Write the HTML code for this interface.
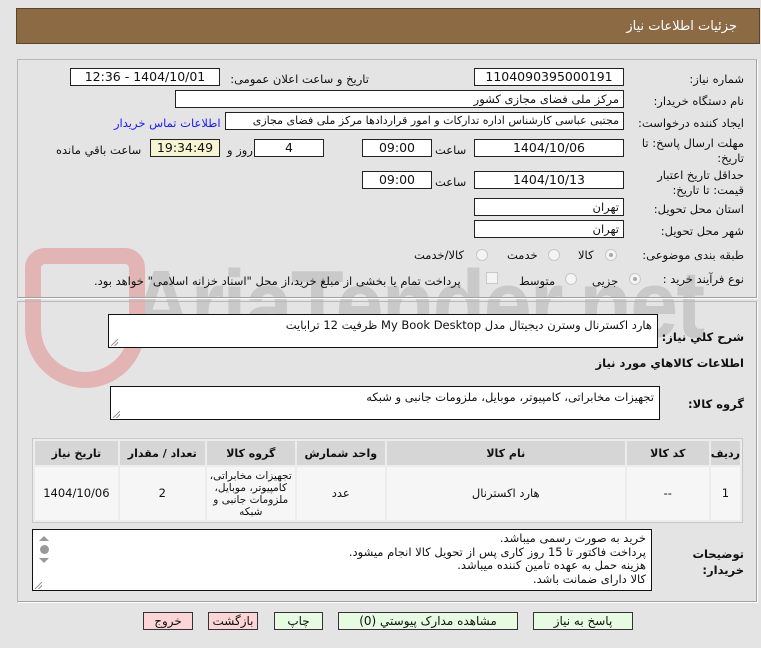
<!DOCTYPE html>
<html><head><meta charset="utf-8"><style>
*{box-sizing:border-box;margin:0;padding:0}
body{width:761px;height:648px;background:#e4e4e4;position:relative;overflow:hidden;font-family:"DejaVu Sans","Liberation Sans",sans-serif;font-size:11.5px;color:#111}
.a{position:absolute;white-space:nowrap}
.hdr{left:16px;top:8px;width:744px;height:36px;background:#8c6b44;border:1px solid #5a4428}
.hdr span{position:absolute;right:22px;top:10px;color:#fff;font-size:13px}
.pnl{position:absolute;border:1px solid #b8b8b8;border-right-color:#fff;border-bottom-color:#fff;box-shadow:inset -1px -1px 0 #a0a0a0}
.in{position:absolute;background:#fff;border:1px solid #222;height:18px;line-height:16px;padding:0 4px;direction:rtl;font-size:11.5px;white-space:nowrap;overflow:hidden}
.c{text-align:center;font-size:12.5px}
.lbl{position:absolute;direction:rtl;text-align:right;white-space:nowrap}
.rd{position:absolute;width:12px;height:12px;border-radius:50%;border:1px solid #c8c8c8;background:#f4f4f4}
.rd.on::after{content:"";position:absolute;left:3px;top:3px;width:4px;height:4px;border-radius:50%;background:#aaa}
.ta{position:absolute;background:#fff;border:1px solid #111;direction:rtl;padding:3px 5px;line-height:14px}
.ta .g{position:absolute;left:2px;bottom:1px;width:7px;height:7px;background:linear-gradient(135deg,transparent 45%,#999 45%,#999 55%,transparent 55%,transparent 70%,#999 70%,#999 80%,transparent 80%)}
table{position:absolute;left:32px;top:438px;width:711px;height:85px;border-collapse:separate;border-spacing:2px;border:1px solid #c8c8c8;background:#ececec;direction:rtl}
th{background:#d6d6d6;font-weight:bold;height:24px;font-size:11px}
td{background:#f6f6f6;text-align:center;font-size:11.5px;line-height:12.5px}
.btn{position:absolute;top:612px;height:18px;border:1px solid #333;text-align:center;line-height:16px;font-size:12px}
.p{background:#fcd6d6}.gr{background:#e6fbe2}
</style></head><body>
<div class="a hdr"><span>جزئیات اطلاعات نیاز</span></div>

<div class="a" style="left:130px;top:250px;font-size:96px;font-weight:bold;color:#c9c9c9;font-family:'Liberation Sans',sans-serif;letter-spacing:-2px;transform:scaleX(0.9);transform-origin:left">AriaTender.net</div>
<div class="a" style="left:25px;top:248px;width:120px;height:140px;border:16px solid #e2b4b4;border-radius:20px 20px 60px 60px"></div>

<div class="pnl" style="left:17px;top:59px;width:741px;height:240px"></div>
<div class="pnl" style="left:17px;top:301px;width:741px;height:302px"></div>

<div class="lbl" style="right:17px;top:72px">شماره نیاز:</div>
<div class="in c" style="left:474px;top:68px;width:150px">1104090395000191</div>
<div class="lbl" style="right:392px;top:72px">تاریخ و ساعت اعلان عمومی:</div>
<div class="in c" style="left:70px;top:68px;width:150px">1404/10/01 - 12:36</div>

<div class="lbl" style="right:17px;top:94px">نام دستگاه خریدار:</div>
<div class="in" style="left:175px;top:90px;width:449px">مرکز ملی فضای مجازی کشور</div>

<div class="lbl" style="right:17px;top:116px">ایجاد کننده درخواست:</div>
<div class="in" style="left:225px;top:112px;width:399px;font-size:11px">مجتبی عباسی کارشناس اداره تدارکات و امور قراردادها مرکز ملی فضای مجازی</div>
<div class="lbl" style="left:114px;top:116px;color:#1a1aff">اطلاعات تماس خریدار</div>

<div class="lbl" style="right:17px;top:136px;line-height:15px">مهلت ارسال پاسخ: تا<br>تاریخ:</div>
<div class="in c" style="left:474px;top:139px;width:150px">1404/10/06</div>
<div class="lbl" style="left:435px;top:143px">ساعت</div>
<div class="in c" style="left:362px;top:139px;width:70px">09:00</div>
<div class="in c" style="left:254px;top:139px;width:70px">4</div>
<div class="lbl" style="left:227px;top:143px">روز و</div>
<div class="in c" style="left:150px;top:139px;width:70px;background:#f5f5d2">19:34:49</div>
<div class="lbl" style="left:56px;top:143px">ساعت باقي مانده</div>

<div class="lbl" style="right:17px;top:168px;line-height:15px">حداقل تاریخ اعتبار<br>قیمت: تا تاریخ:</div>
<div class="in c" style="left:474px;top:171px;width:150px">1404/10/13</div>
<div class="lbl" style="left:435px;top:175px">ساعت</div>
<div class="in c" style="left:362px;top:171px;width:70px">09:00</div>

<div class="lbl" style="right:17px;top:202px">استان محل تحویل:</div>
<div class="in" style="left:474px;top:198px;width:150px">تهران</div>
<div class="lbl" style="right:17px;top:224px">شهر محل تحویل:</div>
<div class="in" style="left:474px;top:220px;width:150px">تهران</div>

<div class="lbl" style="right:17px;top:248px">طبقه بندی موضوعی:</div>
<div class="rd on" style="left:605px;top:249px"></div><div class="lbl" style="left:578px;top:248px">کالا</div>
<div class="rd" style="left:548px;top:249px"></div><div class="lbl" style="left:507px;top:248px">خدمت</div>
<div class="rd" style="left:476px;top:249px"></div><div class="lbl" style="left:414px;top:248px">کالا/خدمت</div>

<div class="lbl" style="right:17px;top:272px">نوع فرآیند خرید :</div>
<div class="rd on" style="left:629px;top:273px"></div><div class="lbl" style="left:592px;top:274px">جزیی</div>
<div class="rd" style="left:565px;top:273px"></div><div class="lbl" style="left:519px;top:274px">متوسط</div>
<div class="a" style="left:486px;top:272px;width:12px;height:12px;border:1px solid #c8c8c8;background:#f4f4f4"></div>
<div class="lbl" style="left:94px;top:274px">پرداخت تمام یا بخشی از مبلغ خرید،از محل "اسناد خزانه اسلامی" خواهد بود.</div>

<div class="lbl" style="right:17px;top:330px;font-weight:bold">شرح کلي نیاز:</div>
<div class="ta" style="left:108px;top:314px;width:550px;height:34px">هارد اکسترنال وسترن دیجیتال مدل My Book Desktop ظرفیت 12 ترابایت<i class="g"></i></div>
<div class="lbl" style="right:17px;top:356px;font-weight:bold">اطلاعات کالاهاي مورد نیاز</div>
<div class="lbl" style="right:17px;top:397px;font-weight:bold">گروه کالا:</div>
<div class="ta" style="left:110px;top:386px;width:550px;height:34px">تجهیزات مخابراتی، کامپیوتر، موبایل، ملزومات جانبی و شبکه<i class="g"></i></div>

<table>
<tr><th style="width:27px">ردیف</th><th style="width:82px">کد کالا</th><th style="width:238px">نام کالا</th><th style="width:88px">واحد شمارش</th><th style="width:88px">گروه کالا</th><th style="width:85px">تعداد / مقدار</th><th>تاریخ نیاز</th></tr>
<tr><td>1</td><td>--</td><td>هارد اکسترنال</td><td>عدد</td><td style="font-size:10.5px;line-height:12px">تجهیزات مخابراتی، کامپیوتر، موبایل، ملزومات جانبی و شبکه</td><td>2</td><td>1404/10/06</td></tr>
</table>

<div class="lbl" style="right:17px;top:546px;font-weight:bold;line-height:16px">توضیحات<br>خریدار:</div>
<div class="ta" style="left:32px;top:529px;width:620px;height:62px;line-height:13.5px;padding-top:2px">خرید به صورت رسمی میباشد.<br>پرداخت فاکتور تا 15 روز کاری پس از تحویل کالا انجام میشود.<br>هزینه حمل به عهده تامین کننده میباشد.<br>کالا دارای ضمانت باشد.
<div style="position:absolute;left:1px;top:1px;width:15px;height:42px;background:#fff"><div style="margin:5px 0 0 3px;width:0;height:0;border-left:5px solid transparent;border-right:5px solid transparent;border-bottom:5px solid #999"></div><div style="margin:4px 0 0 3px;width:9px;height:9px;border-radius:50%;background:#999"></div><div style="margin:4px 0 0 3px;width:0;height:0;border-left:5px solid transparent;border-right:5px solid transparent;border-top:5px solid #999"></div></div><i class="g"></i></div>

<div class="btn p" style="left:143px;width:50px">خروج</div>
<div class="btn p" style="left:208px;width:50px">بازگشت</div>
<div class="btn gr" style="left:274px;width:49px">چاپ</div>
<div class="btn gr" style="left:338px;width:180px">مشاهده مدارک پیوستي (0)</div>
<div class="btn gr" style="left:533px;width:100px">پاسخ به نیاز</div>
</body></html>
